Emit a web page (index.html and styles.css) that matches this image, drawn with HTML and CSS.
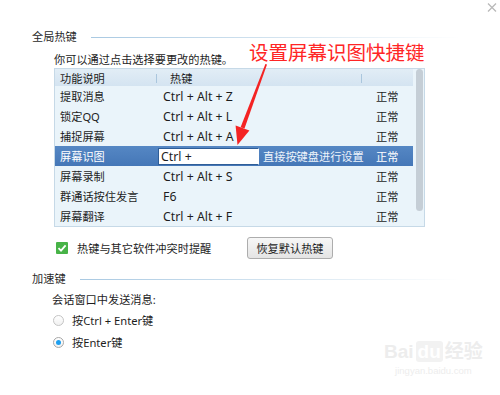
FILE: index.html
```html
<!DOCTYPE html>
<html lang="zh-CN">
<head>
  <meta charset="UTF-8">
  <meta name="viewport" content="width=device-width, initial-scale=1.0">
  <title>热键设置</title>
  <link rel="stylesheet" href="styles.css">
</head>
<body>
  <div class="dialog">
    <svg class="close" width="10" height="9" viewBox="0 0 10 9">
      <path d="M1 0.5 L9 8.5 M9 0.5 L1 8.5" stroke="#b9b9b9" stroke-width="1.3" fill="none"/>
    </svg>

    <div class="group-title"><span>全局热键</span><i class="rule"></i></div>
    <div class="group-body">
      <p class="hint">你可以通过点击选择要更改的热键。</p>

      <div class="hotkey-table">
        <div class="rows">
          <div class="row head">
            <span class="c-name">功能说明</span>
            <span class="c-key">热键</span>
            <span class="c-state"></span>
          </div>
          <div class="row">
            <span class="c-name">提取消息</span>
            <span class="c-key">Ctrl + Alt + Z</span>
            <span class="c-state">正常</span>
          </div>
          <div class="row">
            <span class="c-name">锁定QQ</span>
            <span class="c-key">Ctrl + Alt + L</span>
            <span class="c-state">正常</span>
          </div>
          <div class="row">
            <span class="c-name">捕捉屏幕</span>
            <span class="c-key">Ctrl + Alt + A</span>
            <span class="c-state">正常</span>
          </div>
          <div class="row selected">
            <span class="c-name">屏幕识图</span>
            <span class="c-key">
              <span class="key-input">Ctrl +</span>
              <span class="key-tip">直接按键盘进行设置</span>
            </span>
            <span class="c-state">正常</span>
          </div>
          <div class="row">
            <span class="c-name">屏幕录制</span>
            <span class="c-key">Ctrl + Alt + S</span>
            <span class="c-state">正常</span>
          </div>
          <div class="row">
            <span class="c-name">群通话按住发言</span>
            <span class="c-key">F6</span>
            <span class="c-state">正常</span>
          </div>
          <div class="row">
            <span class="c-name">屏幕翻译</span>
            <span class="c-key">Ctrl + Alt + F</span>
            <span class="c-state">正常</span>
          </div>
        </div>
        <div class="scroll"><i class="thumb"></i></div>
      </div>

      <div class="options">
        <label class="check">
          <i class="box">
            <svg width="12" height="12" viewBox="0 0 12 12">
              <path d="M2.5 6.2 L5 8.6 L9.6 3.4" stroke="#fff" stroke-width="1.8" fill="none"/>
            </svg>
          </i>
          热键与其它软件冲突时提醒
        </label>
        <button class="btn">恢复默认热键</button>
      </div>
    </div>

    <div class="group-title second"><span>加速键</span><i class="rule"></i></div>
    <div class="accel">
      <p class="accel-label">会话窗口中发送消息:</p>
      <label class="radio"><i class="dot"></i>按Ctrl + Enter键</label>
      <label class="radio on"><i class="dot"></i>按Enter键</label>
    </div>

    <!-- red annotation drawn over the screenshot -->
    <div class="note">设置屏幕识图快捷键</div>
    <svg class="arrow" width="500" height="395" viewBox="0 0 500 395">
      <polygon points="265.4,64 267,64.4 244.5,128.6 240.6,127.3" fill="#f42323"/>
      <polygon points="237.5,145 235.6,125.4 249.4,130.6" fill="#f42323"/>
    </svg>

    <div class="watermark">
      <span class="wm-logo">Bai<b>du</b>经验</span>
      <span class="wm-url">jingyan.baidu.com</span>
    </div>
  </div>
</body>
</html>
```

FILE: styles.css
```css
:root {
  --text: #1d1d1d;
  --row-bg: #eaf4fa;
  --table-border: #c6d9e7;
  --select: #4a7dbd;
}

* {
  box-sizing: border-box;
}

body {
  margin: 0;
  background: #fff;
  color: var(--text);
  font-family: "Noto Sans", "Noto Sans CJK SC", sans-serif;
  font-size: 11.2px;
}

p {
  margin: 0;
}

.dialog {
  position: relative;
  width: 500px;
  height: 395px;
  padding: 29px 0 0 32px;
  overflow: hidden;
}

.close {
  position: absolute;
  top: 3px;
  right: 3px;
}

.group-title {
  display: flex;
  align-items: center;
  width: 428px;
  height: 16px;
  line-height: 16px;
  color: #2a2a2a;
}

.group-title .rule {
  flex: 1;
  height: 1px;
  margin-left: 14px;
  background: linear-gradient(to right, #a9c9e2, #d7e6f1 55%, #fff);
}

.group-title.second {
  margin-top: 12px;
}

.group-body {
  margin-left: 22px;
}

.hint {
  margin-top: 7px;
  height: 16px;
  line-height: 16px;
}

/* hotkey list */
.hotkey-table {
  display: flex;
  width: 371px;
  border: 1px solid var(--table-border);
  background: var(--row-bg);
}

.rows {
  width: 358px;
}

.row {
  display: flex;
  align-items: center;
  height: 20px;
}

.row.head {
  height: 17px;
  background: linear-gradient(#e2edf6, #d4e4f1);
}

.c-name {
  width: 103px;
  padding-left: 5px;
  white-space: nowrap;
}

.c-key {
  display: flex;
  align-items: center;
  width: 218px;
  padding-left: 5px;
  font-size: 12.3px;
  white-space: nowrap;
}

.c-state {
  flex: 1;
}

.head .c-name {
  position: relative;
  width: 102px;
}

.head .c-key {
  position: relative;
  width: 205px;
  padding-left: 13px;
  font-size: 11.2px;
}

.head .c-name::after,
.head .c-key::after {
  content: "";
  position: absolute;
  right: 0;
  top: 4px;
  width: 1px;
  height: 9px;
  background: #aac6dd;
}

.row.selected {
  color: #fff;
  background: linear-gradient(#5587c4, #4577b7);
}

.selected .c-key {
  padding-left: 0;
}

.key-input {
  width: 101px;
  height: 17px;
  line-height: 15px;
  padding-left: 2px;
  background: #fff;
  color: var(--text);
  border: 1px solid #2f5e98;
  border-right-color: #fff;
}

.key-tip {
  margin-left: 4px;
  font-size: 11.2px;
  color: #eef4fb;
}

.scroll {
  flex: 1;
  padding-left: 3px;
}

.thumb {
  display: block;
  width: 7px;
  height: 142px;
  border-radius: 4px;
  background: #c5ced6;
}

/* conflict option + reset */
.options {
  display: flex;
  align-items: center;
  margin-top: 10px;
  height: 22px;
}

.check {
  display: flex;
  align-items: center;
  width: 191px;
  margin-left: 2px;
  white-space: nowrap;
}

.box {
  display: block;
  width: 12px;
  height: 12px;
  margin-right: 9px;
  border-radius: 1px;
  background: #47b347;
}

.box svg {
  display: block;
}

.btn {
  width: 86px;
  height: 22px;
  padding: 0;
  border: 1px solid #adadad;
  border-radius: 3px;
  background: linear-gradient(#f7f7f7, #e4e4e4);
  color: var(--text);
  font: inherit;
}

/* accelerator keys */
.accel {
  margin-left: 20px;
}

.accel-label {
  margin-top: 5px;
  height: 16px;
  line-height: 16px;
}

.radio {
  display: flex;
  align-items: center;
  height: 16px;
  margin-top: 4px;
  margin-left: 1px;
}

.radio + .radio {
  margin-top: 6px;
}

.dot {
  display: flex;
  align-items: center;
  justify-content: center;
  width: 11px;
  height: 11px;
  margin-right: 8px;
  border: 1px solid #c4c4c4;
  border-radius: 50%;
  background: linear-gradient(#fff, #f1f1f1);
}

.radio.on .dot {
  border-color: #a8a8a8;
}

.radio.on .dot::after {
  content: "";
  width: 5px;
  height: 5px;
  border-radius: 50%;
  background: #1d9ff0;
}

/* annotation layer */
.note {
  position: absolute;
  left: 249px;
  top: 40px;
  font-family: "Noto Sans CJK SC", sans-serif;
  font-size: 19.5px;
  line-height: 24px;
  color: #ff2525;
  white-space: nowrap;
}

.arrow {
  position: absolute;
  left: 0;
  top: 0;
  pointer-events: none;
}

.watermark {
  position: absolute;
  left: 384px;
  top: 340px;
  display: flex;
  flex-direction: column;
  align-items: center;
  color: #ededed;
}

.wm-logo {
  font-family: "Liberation Sans", "Noto Sans CJK SC", sans-serif;
  font-size: 19px;
  font-weight: bold;
  line-height: 24px;
}

.wm-logo b {
  margin: 0 2px;
  padding: 0 2px;
  border-radius: 3px;
  background: #f2f2f2;
  color: #fff;
}

.wm-url {
  font-family: "Liberation Sans", sans-serif;
  font-size: 9.5px;
  line-height: 14px;
}
```
